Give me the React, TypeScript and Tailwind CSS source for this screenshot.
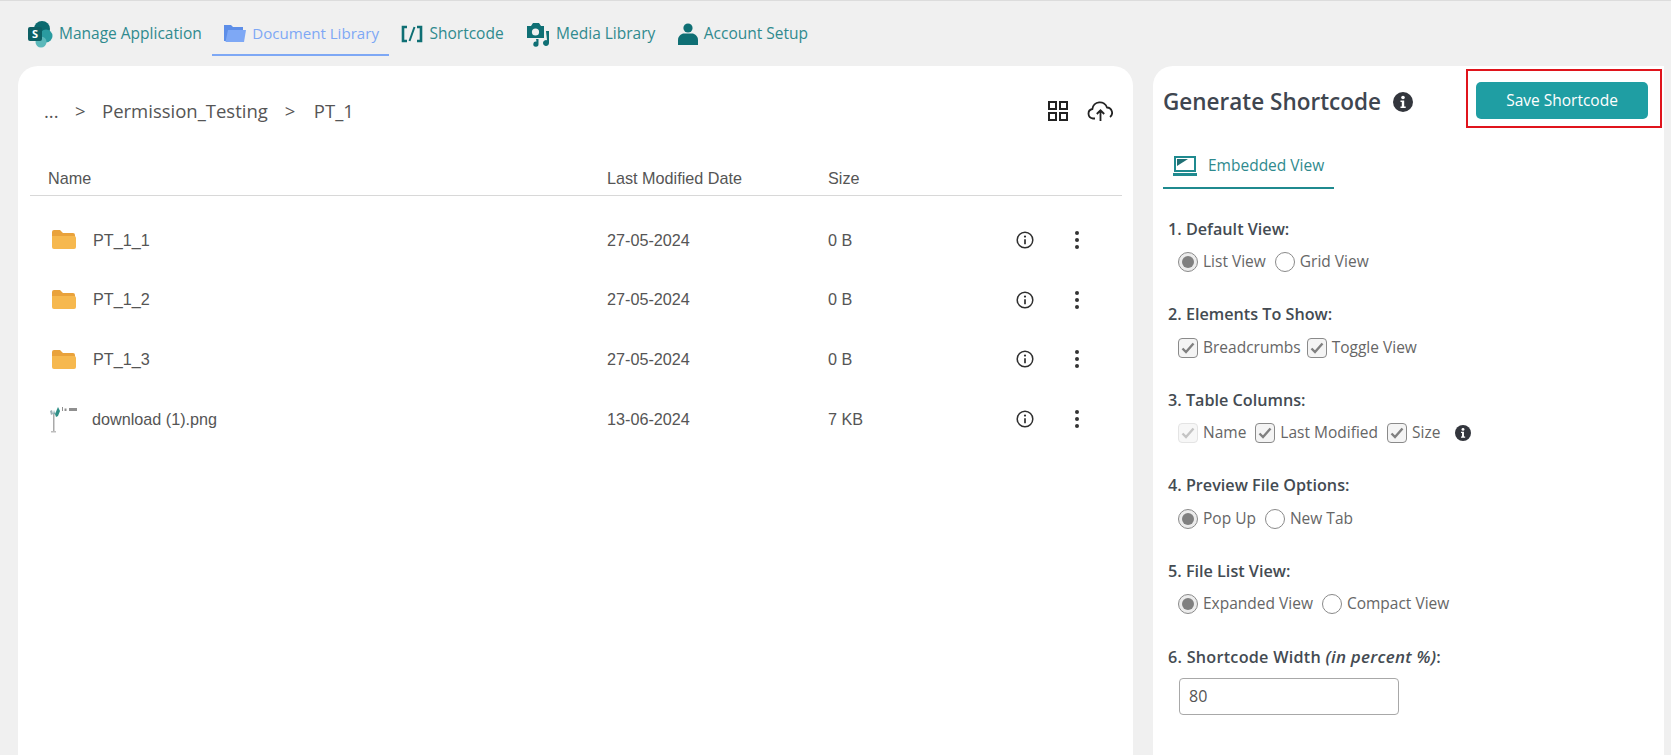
import React from 'react';

const teal = 'text-[#2f8a8e]';

const SharePointIcon = () => (
    <svg width="25" height="27" viewBox="0 0 25 27" className="shrink-0">
        <circle cx="14" cy="8" r="8" fill="#0b6a6f" />
        <circle cx="18" cy="15" r="6.5" fill="#2a9ba0" />
        <circle cx="13" cy="21" r="5.5" fill="#5bb8ba" />
        <rect x="0" y="6" width="14" height="14" rx="2" fill="#0d5f64" />
        <text x="7" y="17" textAnchor="middle" fontSize="11" fontWeight="700" fill="#fff" fontFamily="Open Sans, sans-serif">S</text>
    </svg>
);

const BlueFolder = () => (
    <svg width="22" height="20" viewBox="0 0 22 20" className="shrink-0">
        <path d="M0 2h7l2 2h10v3H5L3 18H0z" fill="#5d8ee8" />
        <path d="M4 7h18l-2 12H1.5z" fill="#7ea8f5" />
    </svg>
);

const CodeIcon = () => (
    <svg width="22" height="18" viewBox="0 0 22 18" fill="none" stroke="#0f6f74" strokeWidth="2.6" className="shrink-0">
        <path d="M6 2H2v14h4" />
        <path d="M16 2h4v14h-4" />
        <path d="M13.5 2 8.5 16" strokeWidth="2" />
    </svg>
);

const MediaIcon = () => (
    <svg width="24" height="25" viewBox="0 0 24 25" className="shrink-0">
        <path d="M1 4h4l2-3h6l2 3h3v12H1z" fill="#0f6f74" />
        <circle cx="9.5" cy="10" r="3.6" fill="#f0f0f0" />
        <path d="M20 9h3v12a3 3 0 1 1-2-2.8z" fill="#0f6f74" />
        <path d="M10 17h2.5v5a2.6 2.6 0 1 1-2-2.4z" fill="#0f6f74" />
    </svg>
);

const UserIcon = () => (
    <svg width="20" height="22" viewBox="0 0 20 22" className="shrink-0">
        <circle cx="10" cy="5" r="4.6" fill="#0f6f74" />
        <path d="M0 22v-5c0-4 3.5-6.5 6-6.5h8c2.500 0 6 2.500 6 6.500v5z" fill="#0f6f74" />
    </svg>
);

const OrangeFolder = () => (
    <svg width="24" height="19" viewBox="0 0 24 19" className="shrink-0">
        <path d="M0 2a2 2 0 0 1 2-2h6l3 3h10a2 2 0 0 1 2 2v2H0z" fill="#e9a23b" />
        <path d="M0 6h22a2 2 0 0 1 2 2v9a2 2 0 0 1-2 2H2a2 2 0 0 1-2-2z" fill="#f6b84e" />
    </svg>
);

const Thumbnail = () => (
    <svg width="32" height="28" viewBox="0 0 32 28" className="shrink-0">
        <path d="M3 6l2-1 1 4-2 1z" fill="#9bb0b5" />
        <path d="M6 10l1-5 1 4z" fill="#6f9aa0" />
        <path d="M8 9l3-7 2 4-2 5-2 1z" fill="#2f8f86" />
        <path d="M6 9h1.500v17H6z" fill="#a9a9a9" />
        <path d="M4 26h5v1.500H4z" fill="#bdbdbd" />
        <path d="M15 2h1v4h-1zM17.500 3.500h2v2.500h-2zM22 3h8v3h-8z" fill="#8f8f8f" />
    </svg>
);

const InfoOutline = () => (
    <svg width="18" height="18" viewBox="0 0 18 18" fill="none" className="shrink-0">
        <circle cx="9" cy="9" r="7.8" stroke="#2f2f2f" strokeWidth="1.5" />
        <circle cx="9" cy="5.6" r="1.1" fill="#2f2f2f" />
        <path d="M9 8.200v5" stroke="#2f2f2f" strokeWidth="1.700" />
    </svg>
);

const Dots = () => (
    <svg width="6" height="20" viewBox="0 0 6 20" className="shrink-0">
        <circle cx="3" cy="3" r="2" fill="#333" />
        <circle cx="3" cy="10" r="2" fill="#333" />
        <circle cx="3" cy="17" r="2" fill="#333" />
    </svg>
);

const GridIcon = () => (
    <svg width="20" height="20" viewBox="0 0 20 20" fill="none" stroke="#222" strokeWidth="2">
        <rect x="1" y="1" width="7" height="7" />
        <rect x="12" y="1" width="7" height="7" />
        <rect x="1" y="12" width="7" height="7" />
        <rect x="12" y="12" width="7" height="7" />
    </svg>
);

const CloudIcon = () => (
    <svg width="26" height="20" viewBox="0 0 26 20" fill="none" stroke="#222" strokeWidth="1.800">
        <path d="M8 17.500H6a4.800 4.800 0 0 1-.6-9.500A7.500 7.500 0 0 1 20 6.500a5.300 5.300 0 0 1 3 9.500" />
        <path d="M13.500 20V9.500M9.800 13 13.500 9.300 17.200 13" />
    </svg>
);

const InfoFilled = ({ size }: { size: number }) => (
    <svg width={size} height={size} viewBox="0 0 20 20" className="shrink-0">
        <circle cx="10" cy="10" r="10" fill="#33363d" />
        <circle cx="10" cy="5.500" r="1.800" fill="#fff" />
        <path d="M7.500 8.500h3.700v6h1.500v1.500H7.500v-1.500h1.300v-4.500H7.500z" fill="#fff" />
    </svg>
);

const LaptopIcon = () => (
    <svg width="24" height="20" viewBox="0 0 24 20" className="shrink-0">
        <rect x="2" y="1" width="20" height="14" fill="none" stroke="#1f8a8f" strokeWidth="2" />
        <path d="M4 3h11l-11 7z" fill="#1f6f74" />
        <rect x="0" y="17" width="24" height="3" fill="#1f8a8f" />
    </svg>
);

const Radio = ({ on, label }: { on?: boolean; label: string }) => (
    <label className="flex items-center gap-[5px]">
        <span className={`flex h-[20px] w-[20px] items-center justify-center rounded-full border border-[#8a8a8a] ${on ? 'bg-[#ececec]' : 'bg-white'}`}>
            {on && <span className="h-[12px] w-[12px] rounded-full bg-[#808080]" />}
        </span>
        {label}
    </label>
);

const Check = ({ label, disabled }: { label: string; disabled?: boolean }) => (
    <label className="flex items-center gap-[5px]">
        <span className={`flex h-[20px] w-[20px] items-center justify-center rounded-[4px] border ${disabled ? 'border-[#e4e4e4] bg-[#f7f7f7]' : 'border-[#8a8a8a] bg-[#f4f4f4]'}`}>
            <svg width="14" height="12" viewBox="0 0 14 12" fill="none" stroke={disabled ? '#c4c4c4' : '#808080'} strokeWidth="2.400">
                <path d="M1.500 6.500 5 10l7.500-8.500" />
            </svg>
        </span>
        {label}
    </label>
);

const Section = ({ title, tight, children }: { title: React.ReactNode; tight?: boolean; children: React.ReactNode }) => (
    <div>
        <div className="flex h-[22px] items-center text-[16.200px] font-semibold text-[#444b52]">
            <span>{title}</span>
        </div>
        <div className={`mt-[10px] flex h-[24px] items-center pl-[10px] text-[15.500px] text-[#666] ${tight ? 'gap-[6px]' : 'gap-[9px]'}`}>
            {children}
        </div>
    </div>
);

const tabs = [
    { label: 'Manage Application', icon: <SharePointIcon /> },
    { label: 'Document Library', icon: <BlueFolder />, active: true },
    { label: 'Shortcode', icon: <CodeIcon /> },
    { label: 'Media Library', icon: <MediaIcon /> },
    { label: 'Account Setup', icon: <UserIcon /> },
];

const rows = [
    { name: 'PT_1_1', date: '27-05-2024', size: '0 B' },
    { name: 'PT_1_2', date: '27-05-2024', size: '0 B' },
    { name: 'PT_1_3', date: '27-05-2024', size: '0 B' },
    { name: 'download (1).png', date: '13-06-2024', size: '7 KB', file: true },
];

const App = () => {
    return (
        <div className="flex h-[755px] flex-col overflow-hidden border-t border-[#dcdcdc] bg-[#f0f0f0] font-['Open_Sans',sans-serif]">
            <nav className="ml-[16px] flex h-[55px] shrink-0 items-stretch pt-[16px] text-[15.500px]">
                {tabs.map((tab) => (
                    <div
                        key={tab.label}
                        className={`flex items-center gap-[6px] pb-[5px] pl-[12px] pr-[10.500px] ${tab.active ? 'border-b-2 border-[#7ea8f5] text-[15.100px] text-[#7ea8f5]' : `${teal}`}`}
                    >
                        {tab.icon}
                        {tab.label}
                    </div>
                ))}
            </nav>
            <main className="mt-[10px] flex min-h-0 flex-1 gap-[20px] pl-[18px] pr-[7px]">
                <section className="w-[1115px] shrink-0 rounded-t-[20px] bg-white pl-[12px] pr-[11px]">
                    <div className="mb-[26px] mt-[22px] flex h-[46px] items-center justify-between pl-[14px] pr-[9px]">
                        <div className="flex items-center text-[18.500px] text-[#555]">
                            <span className="w-[31px]">...</span>
                            <span className="w-[27px]">&gt;</span>
                            <span>Permission_Testing</span>
                            <span className="ml-[17px] w-[29px]">&gt;</span>
                            <span>PT_1</span>
                        </div>
                        <div className="flex items-center gap-[19px]">
                            <GridIcon />
                            <CloudIcon />
                        </div>
                    </div>
                    <div className="font-['Liberation_Sans',sans-serif] text-[16.200px] text-[#555]">
                        <div className="grid h-[36px] grid-cols-[577px_221px_1fr] items-center border-b border-[#d8d8d8] pt-[2px]">
                            <div className="pl-[18px]">Name</div>
                            <div>Last Modified Date</div>
                            <div>Size</div>
                        </div>
                        <div className="mt-[14px]">
                            {rows.map((row) => (
                                <div key={row.name} className="grid h-[59.700px] grid-cols-[577px_221px_188px_1fr] items-center">
                                    <div className={`flex items-center ${row.file ? 'gap-[13px] pl-[17px]' : 'gap-[17px] pl-[22px]'}`}>
                                        {row.file ? <Thumbnail /> : <OrangeFolder />}
                                        {row.name}
                                    </div>
                                    <div>{row.date}</div>
                                    <div>{row.size}</div>
                                    <div className="flex items-center gap-[40px]">
                                        <InfoOutline />
                                        <Dots />
                                    </div>
                                </div>
                            ))}
                        </div>
                    </div>
                </section>
                <aside className="w-[511px] shrink-0 rounded-tl-[20px] bg-white">
                    <div className="flex items-start justify-between pl-[10px] pr-[2px] pt-[3px]">
                        <div className="mt-[10px] flex h-[46px] items-center gap-[12px] text-[22.500px] font-semibold text-[#3f4650]">
                            Generate Shortcode
                            <InfoFilled size={20} />
                        </div>
                        <div className="h-[59px] w-[196px] border-[2.500px] border-[#e0141c] pl-[8px] pt-[11px]">
                            <button className="h-[37px] w-[172px] rounded-[5px] bg-[#1f9ea3] text-[15.500px] text-white">Save Shortcode</button>
                        </div>
                    </div>
                    <div className={`ml-[10px] flex h-[61px] w-[171px] items-center gap-[11px] border-b-2 border-[#1f8a8f] pl-[10px] pt-[16px] text-[15.500px] ${teal}`}>
                        <LaptopIcon />
                        Embedded View
                    </div>
                    <div className="ml-[15px] mt-[29px] flex flex-col gap-[29.500px]">
                        <Section title="1. Default View:">
                            <Radio on label="List View" />
                            <Radio label="Grid View" />
                        </Section>
                        <Section title="2. Elements To Show:" tight>
                            <Check label="Breadcrumbs" />
                            <Check label="Toggle View" />
                        </Section>
                        <Section title="3. Table Columns:">
                            <Check label="Name" disabled />
                            <Check label="Last Modified" />
                            <Check label="Size" />
                            <span className="ml-[6px]"><InfoFilled size={16} /></span>
                        </Section>
                        <Section title="4. Preview File Options:">
                            <Radio on label="Pop Up" />
                            <Radio label="New Tab" />
                        </Section>
                        <Section title="5. File List View:">
                            <Radio on label="Expanded View" />
                            <Radio label="Compact View" />
                        </Section>
                        <div>
                            <div className="flex h-[22px] items-center text-[16.200px] font-semibold tracking-[0.25px] text-[#444b52]">
                                <span>6. Shortcode Width <em className="text-[17px]">(in percent %)</em>:</span>
                            </div>
                            <input
                                readOnly
                                value="80"
                                className="ml-[11px] mt-[10px] h-[37px] w-[220px] rounded-[4px] border border-[#a8a8a8] pl-[9px] text-[16px] text-[#555]"
                            />
                        </div>
                    </div>
                </aside>
            </main>
        </div>
    );
};

export default App;
